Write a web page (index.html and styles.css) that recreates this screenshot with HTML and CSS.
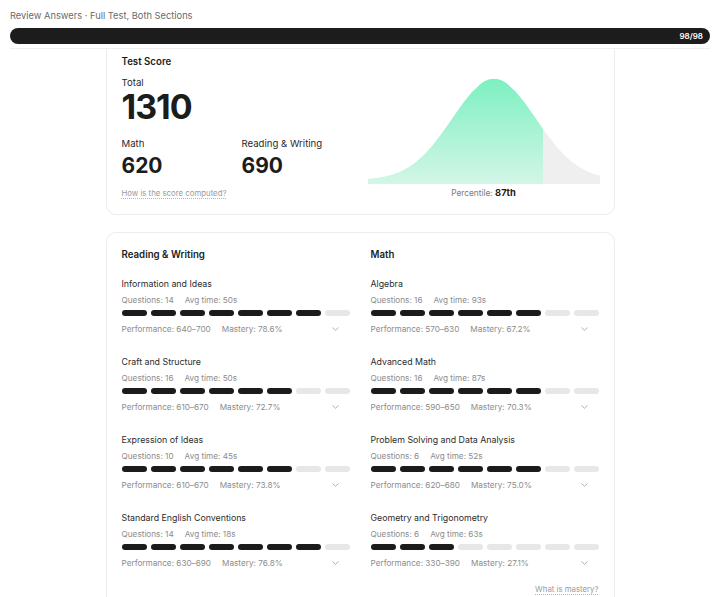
FILE: index.html
```html
<!DOCTYPE html>
<html lang="en">
<head>
    <meta charset="UTF-8">
    <meta name="viewport" content="width=device-width, initial-scale=1.0">
    <title>Review Answers</title>
    <link rel="stylesheet" href="styles.css">
</head>
<body>

    <!-- Top bar -->
    <header class="top">
        <div class="crumb">Review Answers · Full Test, Both Sections</div>
        <div class="progress"><span>98/98</span></div>
    </header>

    <main class="scroll">

        <!-- Score card -->
        <section class="card score-card">
            <div class="score-left">
                <div class="card-title">Test Score</div>
                <div class="label total-label">Total</div>
                <div class="total">1310</div>
                <div class="split">
                    <div class="split-col math-col">
                        <div class="label">Math</div>
                        <div class="sub-score">620</div>
                    </div>
                    <div class="split-col">
                        <div class="label">Reading &amp; Writing</div>
                        <div class="sub-score">690</div>
                    </div>
                </div>
                <a class="help-link" href="#">How is the score computed?</a>
            </div>

            <div class="score-chart">
                <svg class="curve" width="232" height="106" viewBox="0 0 232 106">
                    <defs>
                        <linearGradient id="greenFill" x1="0" y1="0" x2="0" y2="1">
                            <stop offset="0" stop-color="#7df0c1"/>
                            <stop offset="1" stop-color="#d3f6e7"/>
                        </linearGradient>
                    </defs>
                    <path fill="url(#greenFill)" d="M0,106 L0,100.9 C4,100.6 8,100.1 8,100.05 L16,98.7 L24,96.7 L32,93.7 L40,89.6 L48,84 L56,76.8 L64,68 L72,57.8 L80,46.6 L88,34.9 L96,23.7 L104,13.9 L112,6.5 C116,3 120,1 126,1 C132,1 136,3 140,6.5 L148,13.9 L156,23.7 L164,34.9 L172,46.6 L175,50.9 L175,106 Z"/>
                    <path fill="#efefef" d="M175,106 L175,50.9 L180,57.8 L188,68 L196,76.8 L204,84 L212,89.6 L220,93.7 L228,96.7 L232,97.8 L232,106 Z"/>
                </svg>
                <div class="percentile">Percentile: <b>87th</b></div>
            </div>
        </section>

        <!-- Domain breakdown -->
        <section class="card domains">
            <div class="domain-col">
                <h3>Reading &amp; Writing</h3>

                <div class="skill">
                    <div class="skill-name">Information and Ideas</div>
                    <div class="meta"><span>Questions: 14</span><span>Avg time: 50s</span></div>
                    <div class="bars">
                        <i class="on"></i><i class="on"></i><i class="on"></i><i class="on"></i><i class="on"></i><i class="on"></i><i class="on"></i><i></i>
                    </div>
                    <div class="meta perf"><span>Performance: 640–700</span><span>Mastery: 78.6%</span>
                        <svg class="chev" width="7" height="4" viewBox="0 0 7 4"><polyline points="0.5,0.5 3.5,3.3 6.5,0.5" fill="none" stroke="#a8a8a8" stroke-width="0.9"/></svg>
                    </div>
                </div>

                <div class="skill">
                    <div class="skill-name">Craft and Structure</div>
                    <div class="meta"><span>Questions: 16</span><span>Avg time: 50s</span></div>
                    <div class="bars">
                        <i class="on"></i><i class="on"></i><i class="on"></i><i class="on"></i><i class="on"></i><i class="on"></i><i></i><i></i>
                    </div>
                    <div class="meta perf"><span>Performance: 610–670</span><span>Mastery: 72.7%</span>
                        <svg class="chev" width="7" height="4" viewBox="0 0 7 4"><polyline points="0.5,0.5 3.5,3.3 6.5,0.5" fill="none" stroke="#a8a8a8" stroke-width="0.9"/></svg>
                    </div>
                </div>

                <div class="skill">
                    <div class="skill-name">Expression of Ideas</div>
                    <div class="meta"><span>Questions: 10</span><span>Avg time: 45s</span></div>
                    <div class="bars">
                        <i class="on"></i><i class="on"></i><i class="on"></i><i class="on"></i><i class="on"></i><i class="on"></i><i></i><i></i>
                    </div>
                    <div class="meta perf"><span>Performance: 610–670</span><span>Mastery: 73.8%</span>
                        <svg class="chev" width="7" height="4" viewBox="0 0 7 4"><polyline points="0.5,0.5 3.5,3.3 6.5,0.5" fill="none" stroke="#a8a8a8" stroke-width="0.9"/></svg>
                    </div>
                </div>

                <div class="skill">
                    <div class="skill-name">Standard English Conventions</div>
                    <div class="meta"><span>Questions: 14</span><span>Avg time: 18s</span></div>
                    <div class="bars">
                        <i class="on"></i><i class="on"></i><i class="on"></i><i class="on"></i><i class="on"></i><i class="on"></i><i class="on"></i><i></i>
                    </div>
                    <div class="meta perf"><span>Performance: 630–690</span><span>Mastery: 76.8%</span>
                        <svg class="chev" width="7" height="4" viewBox="0 0 7 4"><polyline points="0.5,0.5 3.5,3.3 6.5,0.5" fill="none" stroke="#a8a8a8" stroke-width="0.9"/></svg>
                    </div>
                </div>
            </div>

            <div class="domain-col">
                <h3>Math</h3>

                <div class="skill">
                    <div class="skill-name">Algebra</div>
                    <div class="meta"><span>Questions: 16</span><span>Avg time: 93s</span></div>
                    <div class="bars">
                        <i class="on"></i><i class="on"></i><i class="on"></i><i class="on"></i><i class="on"></i><i class="on"></i><i></i><i></i>
                    </div>
                    <div class="meta perf"><span>Performance: 570–630</span><span>Mastery: 67.2%</span>
                        <svg class="chev" width="7" height="4" viewBox="0 0 7 4"><polyline points="0.5,0.5 3.5,3.3 6.5,0.5" fill="none" stroke="#a8a8a8" stroke-width="0.9"/></svg>
                    </div>
                </div>

                <div class="skill">
                    <div class="skill-name">Advanced Math</div>
                    <div class="meta"><span>Questions: 16</span><span>Avg time: 87s</span></div>
                    <div class="bars">
                        <i class="on"></i><i class="on"></i><i class="on"></i><i class="on"></i><i class="on"></i><i class="on"></i><i></i><i></i>
                    </div>
                    <div class="meta perf"><span>Performance: 590–650</span><span>Mastery: 70.3%</span>
                        <svg class="chev" width="7" height="4" viewBox="0 0 7 4"><polyline points="0.5,0.5 3.5,3.3 6.5,0.5" fill="none" stroke="#a8a8a8" stroke-width="0.9"/></svg>
                    </div>
                </div>

                <div class="skill">
                    <div class="skill-name">Problem Solving and Data Analysis</div>
                    <div class="meta"><span>Questions: 6</span><span>Avg time: 52s</span></div>
                    <div class="bars">
                        <i class="on"></i><i class="on"></i><i class="on"></i><i class="on"></i><i class="on"></i><i class="on"></i><i></i><i></i>
                    </div>
                    <div class="meta perf"><span>Performance: 620–680</span><span>Mastery: 75.0%</span>
                        <svg class="chev" width="7" height="4" viewBox="0 0 7 4"><polyline points="0.5,0.5 3.5,3.3 6.5,0.5" fill="none" stroke="#a8a8a8" stroke-width="0.9"/></svg>
                    </div>
                </div>

                <div class="skill">
                    <div class="skill-name">Geometry and Trigonometry</div>
                    <div class="meta"><span>Questions: 6</span><span>Avg time: 63s</span></div>
                    <div class="bars">
                        <i class="on"></i><i class="on"></i><i class="on"></i><i></i><i></i><i></i><i></i><i></i>
                    </div>
                    <div class="meta perf"><span>Performance: 330–390</span><span>Mastery: 27.1%</span>
                        <svg class="chev" width="7" height="4" viewBox="0 0 7 4"><polyline points="0.5,0.5 3.5,3.3 6.5,0.5" fill="none" stroke="#a8a8a8" stroke-width="0.9"/></svg>
                    </div>
                </div>

                <a class="help-link mastery-link" href="#">What is mastery?</a>
            </div>
        </section>

    </main>

</body>
</html>
```

FILE: styles.css
```css
* {
    margin: 0;
    padding: 0;
    box-sizing: border-box;
}

body {
    font-family: Inter, "Noto Sans", sans-serif;
    background: #fff;
    color: #1c1c1c;
    height: 597px;
    overflow: hidden;
    display: flex;
    flex-direction: column;
}

/* Top bar */
.top {
    margin: 0 10px;
    padding-top: 9px;
    padding-bottom: 4px;
    border-bottom: 1px solid #efefef;
}

.crumb {
    font-size: 9.3px;
    line-height: 14px;
    color: #6a6a6a;
}

.progress {
    margin-top: 5px;
    height: 16px;
    border-radius: 8px;
    background: #1c1c1c;
    display: flex;
    align-items: center;
    justify-content: flex-end;
    padding-right: 7px;
}

.progress span {
    color: #fff;
    font-size: 8px;
    font-weight: 600;
}

/* Scroll area */
.scroll {
    flex: 1;
    overflow: hidden;
}

.card {
    width: 509px;
    margin: 0 auto;
    border: 1px solid #ececec;
    border-radius: 10px;
    background: #fff;
}

/* Score card */
.score-card {
    margin-top: -11px;
    padding: 16px 14px 14px 15px;
    display: flex;
    justify-content: space-between;
}

.card-title {
    font-size: 9.7px;
    line-height: 14px;
    font-weight: 600;
    color: #1c1c1c;
}

.label {
    font-size: 9.6px;
    line-height: 14px;
    color: #2a2a2a;
}

.total-label {
    margin-top: 7px;
}

.total {
    font-size: 34px;
    line-height: 34px;
    font-weight: 700;
    letter-spacing: -1px;
}

.split {
    display: flex;
    margin-top: 13px;
}

.math-col {
    width: 120px;
}

.sub-score {
    font-size: 21px;
    line-height: 24px;
    font-weight: 700;
    margin-top: 3px;
}

.help-link {
    display: inline-block;
    margin-top: 9px;
    font-size: 7.8px;
    line-height: 12px;
    color: #9a9a9a;
    text-decoration: underline dotted #b5b5b5;
    text-underline-offset: 2px;
}

.score-chart {
    width: 232px;
    padding-top: 23px;
    display: flex;
    flex-direction: column;
    align-items: center;
}

.curve {
    display: block;
}

.percentile {
    margin-top: 3px;
    font-size: 8.3px;
    line-height: 12px;
    color: #7a7a7a;
}

.percentile b {
    color: #1c1c1c;
    font-size: 9.3px;
    font-weight: 700;
}

/* Domains */
.domains {
    margin-top: 17px;
    padding: 15px 15px 20px;
    display: grid;
    grid-template-columns: 1fr 1fr;
    column-gap: 21px;
}

.domain-col h3 {
    font-size: 9.7px;
    line-height: 14px;
    font-weight: 600;
    color: #1c1c1c;
    margin-bottom: 16px;
}

.skill {
    margin-bottom: 21px;
}

.skill-name {
    font-size: 8.8px;
    line-height: 12px;
    color: #2c2c2c;
}

.meta {
    display: flex;
    align-items: center;
    gap: 11px;
    margin-top: 4px;
    font-size: 8.2px;
    line-height: 12px;
    color: #8c8c8c;
}

.bars {
    display: flex;
    gap: 4px;
    margin-top: 4px;
}

.bars i {
    flex: 1;
    height: 6px;
    border-radius: 3px;
    background: #e7e7e7;
}

.bars i.on {
    background: #1b1b1b;
}

.perf {
    margin-top: 7px;
}

.chev {
    margin-left: auto;
    margin-right: 11px;
}

.mastery-link {
    display: block;
    text-align: right;
    margin-top: -7px;
}
```
